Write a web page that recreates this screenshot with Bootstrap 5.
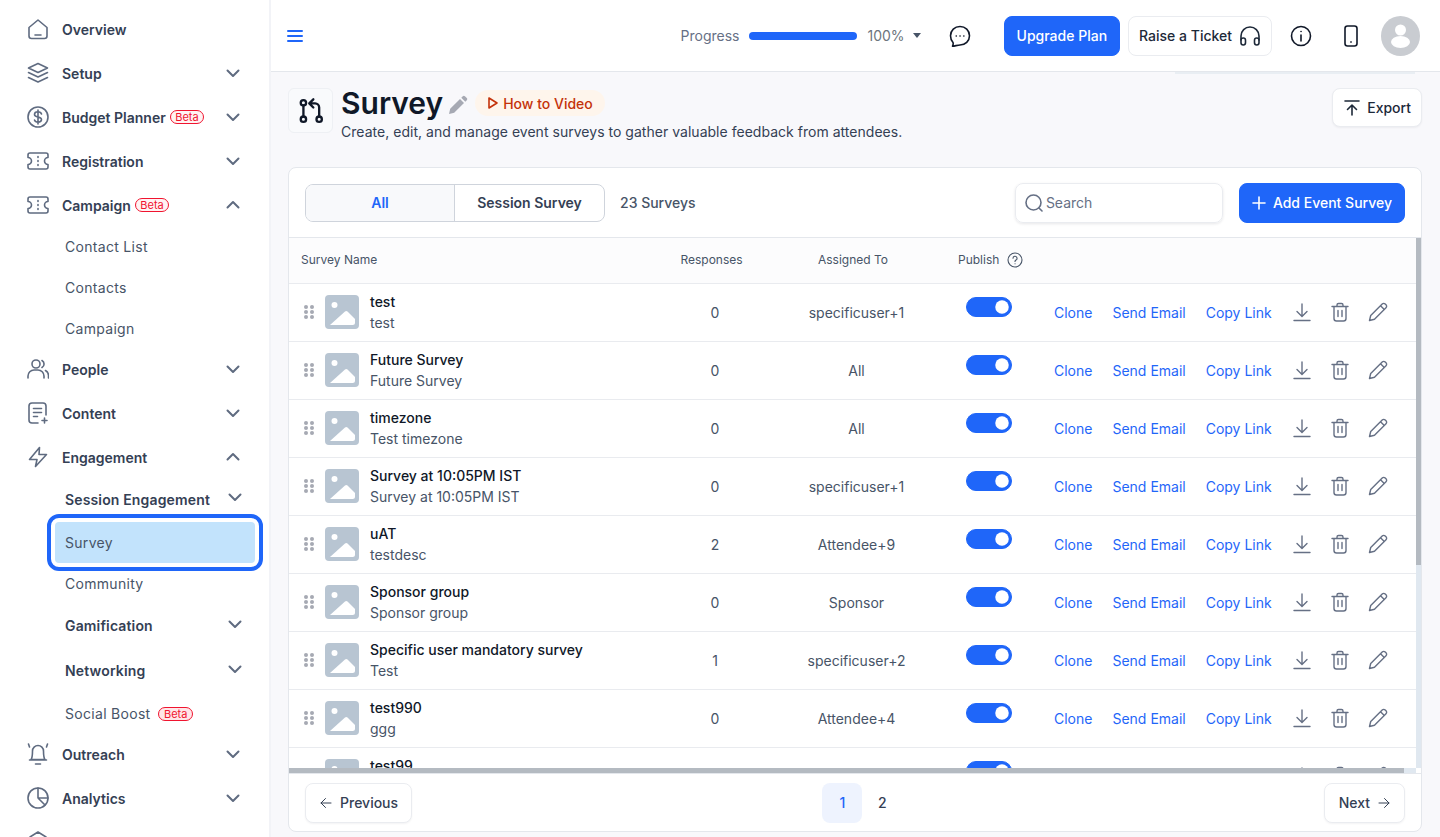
<!DOCTYPE html>
<html lang="en">
<head>
<meta charset="utf-8">
<title>Survey</title>
<link href="https://cdn.jsdelivr.net/npm/bootstrap@5.3.0/dist/css/bootstrap.min.css" rel="stylesheet">
<style>
html,body{height:100%;overflow:hidden}
body{font-family:Inter,"Liberation Sans",sans-serif;font-size:14px;color:#101828;background:#f8f8fb}
.ic{fill:none;stroke:currentColor;stroke-width:1.6;stroke-linecap:round;stroke-linejoin:round;flex:none}
.side{width:271px;flex:none;background:#fff;border-right:2px solid #f2f3f7;padding-top:7px;overflow:hidden}
.side>*{flex-shrink:0}
.sb-row{height:44px;padding:0 29px 0 27px;color:#344054;font-weight:600;flex:none}
.sb-row .ic.lead-ic{width:22px;height:22px;margin-right:13px;color:#5f6b80}
.chev{width:14px;height:14px;color:#5f6b80;margin-left:auto;stroke-width:2}
.sub-list{margin:-1.5px 0}
.sub-row{height:41px;padding:0 27px 0 65px;color:#475467;flex:none;letter-spacing:.3px}
.sub-row.strong{font-weight:600;color:#344054;letter-spacing:.15px}
.sub-row.h40{height:40px;margin-bottom:3px}
.sub-row.h43{height:43px}
.sub-row.h45{height:45px;margin-top:1px}
.sub-row.strong .chev{margin-top:-4px}
.sub-active{height:41px;margin:0 14.5px 0 54.5px;padding-left:10.5px;background:#c2e3fc;border-radius:4px;color:#475467;letter-spacing:.3px;outline:4px solid #1f66f9;outline-offset:4px}
.beta-tag{font-size:11px;line-height:12px;font-weight:400;letter-spacing:0;color:#f0142f;background:#fff3f3;border:1px solid #f0142f;border-radius:8px;padding:0 4.5px;margin-left:4px}
.beta-tag.wide{margin-left:8px;background:#ffe6e8}
.outreach-row{margin-top:-2px}
.main-col{min-width:0}
.top-strip{height:72px;background:#fff;border-bottom:1px solid #e4e7ec;padding:0 20px 0 16px;flex:none;position:relative}
.top-strip::after{content:"";position:absolute;left:904px;width:240px;top:72px;height:2px;background:#e9eef3}
.burger{width:16px;height:16px;color:#1f66f9;stroke-width:2}
.prog-label{color:#667085;margin-right:10px}
.prog-track{width:108px;height:8px;background:#1f66f9;border-radius:4px;margin-right:10px}
.caret-tip{width:0;height:0;border-left:4.5px solid transparent;border-right:4.5px solid transparent;border-top:5px solid #475467;margin:0 28px 0 8px}
.chat-ic{margin-right:25px}
.info-ic{margin-left:18px}
.phone-ic{margin-left:32px}
.avatar-ic{margin-left:23px}
.btn-solid{--bs-btn-bg:#1f66f9;--bs-btn-border-color:#1f66f9;--bs-btn-color:#fff;--bs-btn-hover-bg:#1f66f9;--bs-btn-hover-border-color:#1f66f9;--bs-btn-font-size:14px;--bs-btn-font-weight:500;--bs-btn-border-radius:8px;height:40px;padding:0 12px;white-space:nowrap}
.btn-plain{--bs-btn-bg:#fff;--bs-btn-border-color:#eaecf0;--bs-btn-color:#1d2939;--bs-btn-font-size:14px;--bs-btn-font-weight:500;--bs-btn-border-radius:8px;--bs-btn-hover-bg:#fff;--bs-btn-hover-border-color:#eaecf0;height:40px;padding:0 10px;white-space:nowrap}
.ticket-btn{gap:7px}
.export-btn{height:39px;gap:6px}
.shadowed{box-shadow:0 1px 2px rgba(16,24,40,.05)}
.page-pad{padding:16px 18px 0 17px;flex:1;min-height:0}
.head-icon{width:45px;height:45px;border:1px solid #eef0f4;border-radius:6px;background:#f9fafc;color:#101828;margin-right:8px;flex:none}
.route-ic{stroke-width:2}
.title-row{margin-top:-1px}
.page-title{font-size:30px;line-height:32px;font-weight:600;color:#101828;margin:0}
.title-pen{width:20px;height:20px;color:#a6a9b3;margin:3px 7px 0 5px}
.video-pill{height:26px;padding:0 12px;background:#fef5ec;border-radius:13px;color:#c4320a;font-weight:500}
.page-desc{color:#344054;margin:3px 0 0;line-height:20px;letter-spacing:.025px}
.panel{height:665px;margin-top:25px;background:#fff;border:1px solid #e4e7ec;border-radius:8px;overflow:hidden;flex:none}
.tools{height:70px;padding:0 16px;border-bottom:1px solid #e4e7ec}
.tab-pair{height:38px;width:300px;border:1px solid #cfd4dc;border-radius:8px;overflow:hidden}
.tab-pair span{width:50%;font-weight:600;color:#344054}
.tab-pair span:first-child{background:#f8f9fb;color:#1f66f9;border-right:1px solid #cfd4dc}
.count-note{color:#475467;font-weight:500;margin-left:15px}
.search-box{width:208px;height:40px;border:1px solid #eaecf0;border-radius:8px;padding-left:9px;margin-right:16px;box-shadow:0 1px 3px rgba(16,24,40,.1);color:#667085}
.search-box input{border:0;outline:0;width:150px;font-size:14px;color:#667085;padding:0;margin-left:3px;background:transparent}
.search-box input::placeholder{color:#667085;opacity:1}
.add-btn{padding:0 12px;gap:7px}
.tbl-wrap{height:535px;overflow:hidden;position:relative}
.grid-tbl{width:1127px;table-layout:fixed;margin:0;--bs-table-border-color:#e9ebef}
.grid-tbl th{height:45px;background:#fcfcfd;font-size:12px;font-weight:400;color:#475467;padding:0;vertical-align:middle}
.grid-tbl td{height:58px;padding:0;vertical-align:middle;color:#475467}
.nudge{padding-right:7px!important}
.col-name{padding-left:12px!important}
.col-pub{padding-left:30px!important}
.help-ic{stroke-width:1.1}
.name-cell{padding-left:15px;gap:11px}
.dots{width:10px;height:14px;flex:none;color:#a6a9b3}
.tile{width:34px;height:34px;flex:none;border-radius:4px;background:#b8c5d2}
.name-txt{line-height:21px}
.name-txt b{display:block;font-weight:500;color:#101828}
.form-switch .form-check-input.pub-sw{width:46px;height:20px;margin:-3px 0 0;background-color:#1f66f9;border-color:#1f66f9;float:none}
.act-cell{padding-left:4px;gap:20px;color:#667085}
.act-cell a{color:#1f66f9;text-decoration:none;white-space:nowrap}
.act-ic{width:20px;height:20px;stroke-width:1.4;flex:none}
.act-ic+.act-ic{margin-left:-2px}
.bar-v,.bar-vt,.bar-h,.bar-ht{position:absolute}
.bar-vt{right:0;top:0;width:5px;height:530px;background:#e0e8f0}
.bar-v{right:0;top:0;width:5px;height:327px;background:#b4bac1}
.bar-ht{left:0;bottom:0;width:1127px;height:5px;background:#e0e8f0}
.bar-h{left:0;bottom:0;width:1115px;height:5px;background:#b4bac1}
.foot-bar{height:58px;padding:0 16px;border-top:1px solid #e4e7ec}
.foot-btn{--bs-btn-color:#344054;--bs-btn-border-color:#eaecf0;--bs-btn-bg:#fff;--bs-btn-font-size:14px;--bs-btn-font-weight:500;--bs-btn-border-radius:8px;height:40px;padding:0 14px;box-shadow:0 1px 2px rgba(16,24,40,.05)}
.prev-btn{width:107px;padding-right:0}
.arrow-ic{stroke-width:1}
.page-chip{width:40px;height:40px;border-radius:8px;color:#344054;font-weight:500}
.page-chip.on{background:#eef3fe;color:#1f66f9}
.pager-grp{margin-right:11px}
</style>
</head>
<body class="d-flex">
<svg width="0" height="0" class="position-absolute">
<defs>
<symbol id="i-chev-d" viewBox="0 0 14 14"><path d="M1.5 4.5 7 10l5.5-5.5"/></symbol>
<symbol id="i-chev-u" viewBox="0 0 14 14"><path d="M1.5 9.5 7 4l5.5 5.5"/></symbol>
<symbol id="i-home" viewBox="0 0 22 22"><path d="M2 9.5 11 2l9 7.5V18a2.5 2.5 0 0 1-2.5 2.5h-13A2.5 2.5 0 0 1 2 18zM8 17h6"/></symbol>
<symbol id="i-layers" viewBox="0 0 22 22"><path d="M11 1.500 20.500 6 11 10.500 1.500 6zM1.500 10.500 11 15 20.500 10.500M1.500 15.500 11 20 20.500 15.500"/></symbol>
<symbol id="i-dollar" viewBox="0 0 22 22"><circle cx="11" cy="11" r="10"/><path d="M14.500 8c-.5-1.500-2-2.200-3.500-2.200-2 0-3.500 1-3.500 2.600 0 3.600 7 1.600 7 5.200 0 1.600-1.500 2.600-3.500 2.600-1.600 0-3-.7-3.500-2.200M11 4v14"/></symbol>
<symbol id="i-ticket" viewBox="0 0 22 22"><path d="M3 3h16a2 2 0 0 1 2 2v2.500a3.500 3.500 0 0 0 0 7V17a2 2 0 0 1-2 2H3a2 2 0 0 1-2-2v-2.500a3.500 3.500 0 0 0 0-7V5a2 2 0 0 1 2-2zM11 6.500v1M11 10.500v1M11 14.500v1"/></symbol>
<symbol id="i-people" viewBox="0 0 22 22"><circle cx="9" cy="6" r="4"/><path d="M1 20v-2a6 6 0 0 1 6-6h4a6 6 0 0 1 6 6v2M15 2.500a4 4 0 0 1 0 7M18.500 12.500a6 6 0 0 1 3 5.500v2"/></symbol>
<symbol id="i-doc" viewBox="0 0 22 22"><path d="M11 21H5a3 3 0 0 1-3-3V4a3 3 0 0 1 3-3h11a3 3 0 0 1 3 3v9M6.500 6.500h8M6.500 10.500h8M6.500 14.500h4M17.500 16v5M15 18.500h5"/></symbol>
<symbol id="i-bolt" viewBox="0 0 22 22"><path d="M12.500 1.500 2.500 13.500H10L8.500 20.500 19.500 8.500H12z"/></symbol>
<symbol id="i-bell" viewBox="0 0 22 22"><path d="M4 16.500c1.200-1.500 1.500-3.500 1.500-8.500a5.500 5.500 0 0 1 11 0c0 5 .3 7 1.500 8.500zM2.500 17h17M8.500 21h5M1.500 1 2.500 4M20.500 1 19.500 4"/></symbol>
<symbol id="i-pie" viewBox="0 0 22 22"><circle cx="11" cy="11" r="10"/><path d="M11 1v10l7 7M11 11H21"/></symbol>
<symbol id="i-gear" viewBox="0 0 22 22"><path d="M11 1l8 5v10l-8 5-8-5V6z"/></symbol>
<symbol id="i-menu" viewBox="0 0 16 16"><path d="M1 3h14M1 8h14M1 13h14"/></symbol>
<symbol id="i-chat" viewBox="0 0 22 22"><path d="M11 1.500c5.300 0 9.500 4 9.500 9.300s-4.200 9.200-9.500 9.200c-1.800 0-5 .9-7.500 1.200.5-1.200 1-2.700.5-3.700C2.400 15.700 1.500 13.300 1.500 10.800 1.500 5.500 5.700 1.500 11 1.500z"/><path d="M7.200 11h.1M11 11h.1M14.800 11h.1"/></symbol>
<symbol id="i-head" viewBox="0 0 22 22"><path d="M2 15v-4a9 9 0 0 1 18 0v4"/><rect x="2" y="13" width="4.500" height="7" rx="2.200"/><rect x="15.500" y="13" width="4.500" height="7" rx="2.200"/></symbol>
<symbol id="i-info" viewBox="0 0 22 22"><circle cx="11" cy="11" r="9.500"/><path d="M11 10v6M11 6.500h.1"/></symbol>
<symbol id="i-phone" viewBox="0 0 14 22"><rect x="1" y="1" width="12" height="20" rx="2.500"/><path d="M6.800 17h.4"/></symbol>
<symbol id="i-route" viewBox="0 0 24 24"><circle cx="5.500" cy="5" r="2.300"/><circle cx="5.500" cy="19" r="2.300"/><circle cx="19" cy="19" r="2.300"/><path d="M5.500 7.300v9.400M19 16.700V9a3.500 3.500 0 0 0-3.500-3.500H11M14 2 10.500 5.500 14 9"/></symbol>
<symbol id="i-pen-fill" viewBox="0 0 20 20"><path d="M1 19l1.200-5.200L12 4l4 4-9.800 9.800zM13.300 2.700l1.500-1.500a1.500 1.500 0 0 1 2.100 0l1.900 1.900a1.500 1.500 0 0 1 0 2.100l-1.500 1.500z" fill="currentColor" stroke="none"/></symbol>
<symbol id="i-play" viewBox="0 0 12 14"><path d="M2 2v10l8-5z"/></symbol>
<symbol id="i-export" viewBox="0 0 18 18"><path d="M2 2h14M9 16V6M4.500 10.500 9 6l4.500 4.500"/></symbol>
<symbol id="i-search" viewBox="0 0 18 18"><circle cx="8.500" cy="8.500" r="7.500"/><path d="m14 14 3 3"/></symbol>
<symbol id="i-plus" viewBox="0 0 14 14"><path d="M7 1v12M1 7h12"/></symbol>
<symbol id="i-help" viewBox="0 0 16 16"><circle cx="8" cy="8" r="7"/><path d="M6 6.300a2 2 0 1 1 3 1.700c-.7.400-1 .8-1 1.500M8 11.800h.1"/></symbol>
<symbol id="i-dots" viewBox="0 0 10 14"><g fill="currentColor" stroke="none"><circle cx="2" cy="2" r="2"/><circle cx="8" cy="2" r="2"/><circle cx="2" cy="7" r="2"/><circle cx="8" cy="7" r="2"/><circle cx="2" cy="12" r="2"/><circle cx="8" cy="12" r="2"/></g></symbol>
<symbol id="i-tile" viewBox="0 0 34 34"><circle cx="9.500" cy="10" r="3" fill="#fff" stroke="none"/><path d="M5 30 20 16.500c.8-.7 1.700-.7 2.500 0L30 24v3.500a2.500 2.500 0 0 1-2.500 2.500z" fill="#fff" stroke="none"/></symbol>
<symbol id="i-down" viewBox="0 0 20 20"><path d="M10 2v12M5 9.500l5 5 5-5M2 18.500h16"/></symbol>
<symbol id="i-trash" viewBox="0 0 20 20"><path d="M2 4.500h16M7 4.500V3a1.500 1.500 0 0 1 1.500-1.500h3A1.500 1.500 0 0 1 13 3v1.500M4 4.500v12A2.500 2.500 0 0 0 6.500 19h7a2.500 2.500 0 0 0 2.500-2.500v-12M8 8.500v6M12 8.500v6"/></symbol>
<symbol id="i-pen" viewBox="0 0 20 20"><path d="M1.500 18.500l1.200-5L14.200 2a2.100 2.100 0 0 1 3 0l.8.800a2.100 2.100 0 0 1 0 3L6.500 17.300zM12.500 3.700l3.800 3.800"/></symbol>
<symbol id="i-left" viewBox="0 0 12 12"><path d="M11 6H1M5.500 1.500 1 6l4.500 4.500"/></symbol>
<symbol id="i-right" viewBox="0 0 12 12"><path d="M1 6h10M6.500 1.500 11 6l-4.500 4.500"/></symbol>
</defs>
</svg>

<aside class="side d-flex flex-column">
  <div class="sb-row d-flex align-items-center"><svg class="ic lead-ic"><use href="#i-home"/></svg>Overview</div>
  <div class="sb-row d-flex align-items-center"><svg class="ic lead-ic"><use href="#i-layers"/></svg>Setup<svg class="ic chev"><use href="#i-chev-d"/></svg></div>
  <div class="sb-row d-flex align-items-center"><svg class="ic lead-ic"><use href="#i-dollar"/></svg>Budget Planner<span class="beta-tag">Beta</span><svg class="ic chev"><use href="#i-chev-d"/></svg></div>
  <div class="sb-row d-flex align-items-center"><svg class="ic lead-ic"><use href="#i-ticket"/></svg>Registration<svg class="ic chev"><use href="#i-chev-d"/></svg></div>
  <div class="sb-row d-flex align-items-center"><svg class="ic lead-ic"><use href="#i-ticket"/></svg>Campaign<span class="beta-tag">Beta</span><svg class="ic chev"><use href="#i-chev-u"/></svg></div>
  <div class="sub-list d-flex flex-column">
    <div class="sub-row d-flex align-items-center">Contact List</div>
    <div class="sub-row d-flex align-items-center">Contacts</div>
    <div class="sub-row d-flex align-items-center">Campaign</div>
  </div>
  <div class="sb-row d-flex align-items-center"><svg class="ic lead-ic"><use href="#i-people"/></svg>People<svg class="ic chev"><use href="#i-chev-d"/></svg></div>
  <div class="sb-row d-flex align-items-center"><svg class="ic lead-ic"><use href="#i-doc"/></svg>Content<svg class="ic chev"><use href="#i-chev-d"/></svg></div>
  <div class="sb-row d-flex align-items-center"><svg class="ic lead-ic"><use href="#i-bolt"/></svg>Engagement<svg class="ic chev"><use href="#i-chev-u"/></svg></div>
  <div class="sub-row strong h40 d-flex align-items-center">Session Engagement<svg class="ic chev"><use href="#i-chev-d"/></svg></div>
  <div class="sub-active d-flex align-items-center">Survey</div>
  <div class="sub-row d-flex align-items-center">Community</div>
  <div class="sub-row strong h43 d-flex align-items-center">Gamification<svg class="ic chev"><use href="#i-chev-d"/></svg></div>
  <div class="sub-row strong h45 d-flex align-items-center">Networking<svg class="ic chev"><use href="#i-chev-d"/></svg></div>
  <div class="sub-row d-flex align-items-center">Social Boost<span class="beta-tag wide">Beta</span></div>
  <div class="sb-row outreach-row d-flex align-items-center"><svg class="ic lead-ic"><use href="#i-bell"/></svg>Outreach<svg class="ic chev"><use href="#i-chev-d"/></svg></div>
  <div class="sb-row d-flex align-items-center"><svg class="ic lead-ic"><use href="#i-pie"/></svg>Analytics<svg class="ic chev"><use href="#i-chev-d"/></svg></div>
  <div class="sb-row d-flex align-items-center"><svg class="ic lead-ic"><use href="#i-gear"/></svg></div>
</aside>

<div class="main-col flex-grow-1 d-flex flex-column">
  <header class="top-strip d-flex align-items-center">
    <svg class="ic burger"><use href="#i-menu"/></svg>
    <span class="prog-label ms-auto">Progress</span>
    <span class="prog-track"></span>
    <span class="text-secondary">100%</span>
    <span class="caret-tip"></span>
    <svg class="ic chat-ic" width="22" height="22"><use href="#i-chat"/></svg>
    <a class="btn btn-solid d-flex align-items-center ms-2" href="#">Upgrade Plan</a>
    <a class="btn btn-plain ticket-btn d-flex align-items-center ms-2" href="#">Raise a Ticket<svg class="ic" width="22" height="22"><use href="#i-head"/></svg></a>
    <svg class="ic info-ic" width="22" height="22"><use href="#i-info"/></svg>
    <svg class="ic phone-ic" width="14" height="22"><use href="#i-phone"/></svg>
    <svg class="flex-shrink-0 avatar-ic" width="39" height="40" viewBox="0 0 39 40"><ellipse cx="19.500" cy="20" rx="19.500" ry="20" fill="#c9ccd1"/><circle cx="19.500" cy="14" r="5.500" fill="#fff"/><ellipse cx="19.500" cy="26" rx="9.500" ry="6" fill="#fff"/></svg>
  </header>

  <main class="page-pad d-flex flex-column">
    <div class="d-flex align-items-start">
      <div class="head-icon d-flex align-items-center justify-content-center"><svg class="ic route-ic" width="28" height="28"><use href="#i-route"/></svg></div>
      <div>
        <div class="title-row d-flex align-items-center">
          <h1 class="page-title">Survey</h1>
          <svg class="ic title-pen"><use href="#i-pen-fill"/></svg>
          <span class="video-pill d-flex align-items-center gap-1"><svg class="ic" width="12" height="14"><use href="#i-play"/></svg>How to Video</span>
        </div>
        <p class="page-desc">Create, edit, and manage event surveys to gather valuable feedback from attendees.</p>
      </div>
      <a class="btn btn-plain export-btn d-flex align-items-center ms-auto shadowed" href="#"><svg class="ic" width="18" height="18"><use href="#i-export"/></svg>Export</a>
    </div>

    <section class="panel d-flex flex-column">
      <div class="tools d-flex align-items-center">
        <div class="tab-pair d-flex"><span class="d-flex align-items-center justify-content-center">All</span><span class="d-flex align-items-center justify-content-center">Session Survey</span></div>
        <span class="count-note">23 Surveys</span>
        <div class="search-box d-flex align-items-center ms-auto"><svg class="ic" width="18" height="18"><use href="#i-search"/></svg><input type="text" placeholder="Search" aria-label="Search"></div>
        <a class="btn btn-solid add-btn d-flex align-items-center" href="#"><svg class="ic" width="14" height="14"><use href="#i-plus"/></svg>Add Event Survey</a>
      </div>
      <div class="tbl-wrap">
        <table class="table grid-tbl">
          <colgroup><col style="width:356px"><col style="width:140px"><col style="width:143px"><col style="width:122px"><col style="width:366px"></colgroup>
          <thead><tr>
            <th class="col-name">Survey Name</th>
            <th class="text-center nudge">Responses</th>
            <th class="text-center nudge">Assigned To</th>
            <th class="col-pub"><span class="d-flex align-items-center gap-2">Publish<svg class="ic help-ic" width="16" height="16"><use href="#i-help"/></svg></span></th>
            <th></th>
          </tr></thead>
          <tbody>
            <tr><td><div class="name-cell d-flex align-items-center"><svg class="dots"><use href="#i-dots"/></svg><svg class="tile"><use href="#i-tile"/></svg><div class="name-txt"><b>test</b>test</div></div></td><td class="text-center">0</td><td class="text-center">specificuser+1</td><td><div class="form-check form-switch d-flex justify-content-center p-0 m-0"><input class="form-check-input pub-sw" type="checkbox" checked aria-label="Publish"></div></td><td><div class="act-cell d-flex align-items-center"><a href="#">Clone</a><a href="#">Send Email</a><a href="#">Copy Link</a><svg class="ic act-ic"><use href="#i-down"/></svg><svg class="ic act-ic"><use href="#i-trash"/></svg><svg class="ic act-ic"><use href="#i-pen"/></svg></div></td></tr>
            <tr><td><div class="name-cell d-flex align-items-center"><svg class="dots"><use href="#i-dots"/></svg><svg class="tile"><use href="#i-tile"/></svg><div class="name-txt"><b>Future Survey</b>Future Survey</div></div></td><td class="text-center">0</td><td class="text-center">All</td><td><div class="form-check form-switch d-flex justify-content-center p-0 m-0"><input class="form-check-input pub-sw" type="checkbox" checked aria-label="Publish"></div></td><td><div class="act-cell d-flex align-items-center"><a href="#">Clone</a><a href="#">Send Email</a><a href="#">Copy Link</a><svg class="ic act-ic"><use href="#i-down"/></svg><svg class="ic act-ic"><use href="#i-trash"/></svg><svg class="ic act-ic"><use href="#i-pen"/></svg></div></td></tr>
            <tr><td><div class="name-cell d-flex align-items-center"><svg class="dots"><use href="#i-dots"/></svg><svg class="tile"><use href="#i-tile"/></svg><div class="name-txt"><b>timezone</b>Test timezone</div></div></td><td class="text-center">0</td><td class="text-center">All</td><td><div class="form-check form-switch d-flex justify-content-center p-0 m-0"><input class="form-check-input pub-sw" type="checkbox" checked aria-label="Publish"></div></td><td><div class="act-cell d-flex align-items-center"><a href="#">Clone</a><a href="#">Send Email</a><a href="#">Copy Link</a><svg class="ic act-ic"><use href="#i-down"/></svg><svg class="ic act-ic"><use href="#i-trash"/></svg><svg class="ic act-ic"><use href="#i-pen"/></svg></div></td></tr>
            <tr><td><div class="name-cell d-flex align-items-center"><svg class="dots"><use href="#i-dots"/></svg><svg class="tile"><use href="#i-tile"/></svg><div class="name-txt"><b>Survey at 10:05PM IST</b>Survey at 10:05PM IST</div></div></td><td class="text-center">0</td><td class="text-center">specificuser+1</td><td><div class="form-check form-switch d-flex justify-content-center p-0 m-0"><input class="form-check-input pub-sw" type="checkbox" checked aria-label="Publish"></div></td><td><div class="act-cell d-flex align-items-center"><a href="#">Clone</a><a href="#">Send Email</a><a href="#">Copy Link</a><svg class="ic act-ic"><use href="#i-down"/></svg><svg class="ic act-ic"><use href="#i-trash"/></svg><svg class="ic act-ic"><use href="#i-pen"/></svg></div></td></tr>
            <tr><td><div class="name-cell d-flex align-items-center"><svg class="dots"><use href="#i-dots"/></svg><svg class="tile"><use href="#i-tile"/></svg><div class="name-txt"><b>uAT</b>testdesc</div></div></td><td class="text-center">2</td><td class="text-center">Attendee+9</td><td><div class="form-check form-switch d-flex justify-content-center p-0 m-0"><input class="form-check-input pub-sw" type="checkbox" checked aria-label="Publish"></div></td><td><div class="act-cell d-flex align-items-center"><a href="#">Clone</a><a href="#">Send Email</a><a href="#">Copy Link</a><svg class="ic act-ic"><use href="#i-down"/></svg><svg class="ic act-ic"><use href="#i-trash"/></svg><svg class="ic act-ic"><use href="#i-pen"/></svg></div></td></tr>
            <tr><td><div class="name-cell d-flex align-items-center"><svg class="dots"><use href="#i-dots"/></svg><svg class="tile"><use href="#i-tile"/></svg><div class="name-txt"><b>Sponsor group</b>Sponsor group</div></div></td><td class="text-center">0</td><td class="text-center">Sponsor</td><td><div class="form-check form-switch d-flex justify-content-center p-0 m-0"><input class="form-check-input pub-sw" type="checkbox" checked aria-label="Publish"></div></td><td><div class="act-cell d-flex align-items-center"><a href="#">Clone</a><a href="#">Send Email</a><a href="#">Copy Link</a><svg class="ic act-ic"><use href="#i-down"/></svg><svg class="ic act-ic"><use href="#i-trash"/></svg><svg class="ic act-ic"><use href="#i-pen"/></svg></div></td></tr>
            <tr><td><div class="name-cell d-flex align-items-center"><svg class="dots"><use href="#i-dots"/></svg><svg class="tile"><use href="#i-tile"/></svg><div class="name-txt"><b>Specific user mandatory survey</b>Test</div></div></td><td class="text-center">1</td><td class="text-center">specificuser+2</td><td><div class="form-check form-switch d-flex justify-content-center p-0 m-0"><input class="form-check-input pub-sw" type="checkbox" checked aria-label="Publish"></div></td><td><div class="act-cell d-flex align-items-center"><a href="#">Clone</a><a href="#">Send Email</a><a href="#">Copy Link</a><svg class="ic act-ic"><use href="#i-down"/></svg><svg class="ic act-ic"><use href="#i-trash"/></svg><svg class="ic act-ic"><use href="#i-pen"/></svg></div></td></tr>
            <tr><td><div class="name-cell d-flex align-items-center"><svg class="dots"><use href="#i-dots"/></svg><svg class="tile"><use href="#i-tile"/></svg><div class="name-txt"><b>test990</b>ggg</div></div></td><td class="text-center">0</td><td class="text-center">Attendee+4</td><td><div class="form-check form-switch d-flex justify-content-center p-0 m-0"><input class="form-check-input pub-sw" type="checkbox" checked aria-label="Publish"></div></td><td><div class="act-cell d-flex align-items-center"><a href="#">Clone</a><a href="#">Send Email</a><a href="#">Copy Link</a><svg class="ic act-ic"><use href="#i-down"/></svg><svg class="ic act-ic"><use href="#i-trash"/></svg><svg class="ic act-ic"><use href="#i-pen"/></svg></div></td></tr>
            <tr><td><div class="name-cell d-flex align-items-center"><svg class="dots"><use href="#i-dots"/></svg><svg class="tile"><use href="#i-tile"/></svg><div class="name-txt"><b>test99</b>test99</div></div></td><td class="text-center">0</td><td class="text-center">All</td><td><div class="form-check form-switch d-flex justify-content-center p-0 m-0"><input class="form-check-input pub-sw" type="checkbox" checked aria-label="Publish"></div></td><td><div class="act-cell d-flex align-items-center"><a href="#">Clone</a><a href="#">Send Email</a><a href="#">Copy Link</a><svg class="ic act-ic"><use href="#i-down"/></svg><svg class="ic act-ic"><use href="#i-trash"/></svg><svg class="ic act-ic"><use href="#i-pen"/></svg></div></td></tr>
          </tbody>
        </table>
        <div class="bar-vt"></div><div class="bar-v"></div><div class="bar-ht"></div><div class="bar-h"></div>
      </div>
      <div class="foot-bar d-flex align-items-center justify-content-between">
        <a class="btn foot-btn prev-btn d-flex align-items-center gap-2" href="#"><svg class="ic arrow-ic" width="12" height="12"><use href="#i-left"/></svg>Previous</a>
        <div class="pager-grp d-flex"><span class="page-chip on d-flex align-items-center justify-content-center">1</span><span class="page-chip d-flex align-items-center justify-content-center">2</span></div>
        <a class="btn foot-btn d-flex align-items-center gap-2" href="#">Next<svg class="ic arrow-ic" width="12" height="12"><use href="#i-right"/></svg></a>
      </div>
    </section>
  </main>
</div>
<script src="https://cdn.jsdelivr.net/npm/bootstrap@5.3.0/dist/js/bootstrap.bundle.min.js"></script>
</body>
</html>
